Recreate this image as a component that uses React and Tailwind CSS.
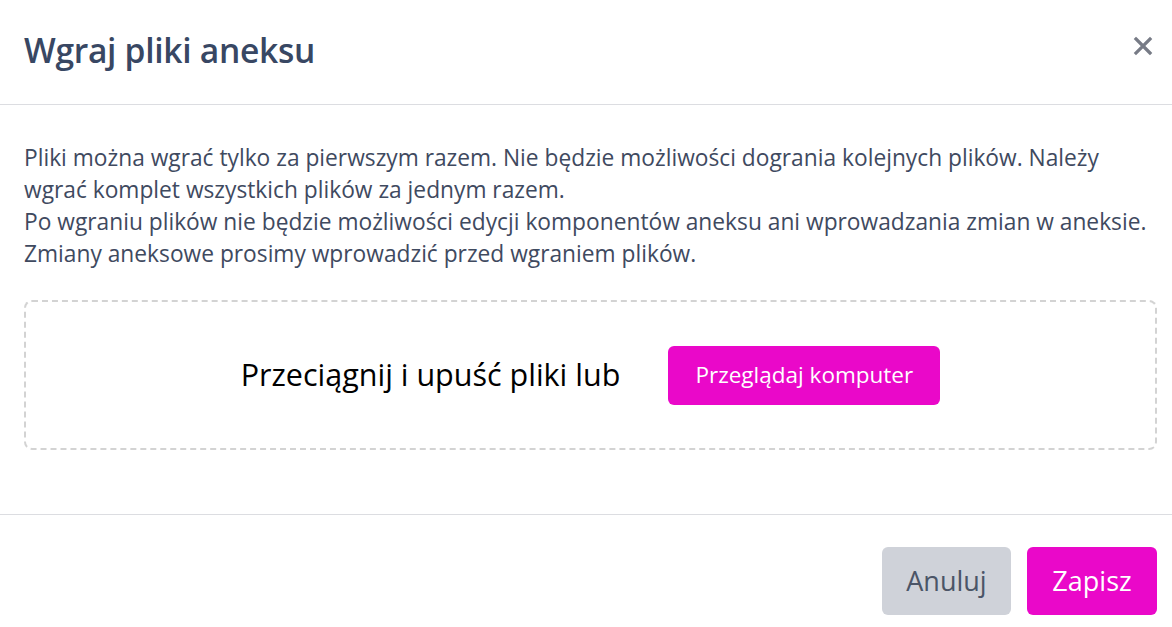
import React from "react";

export default function App() {
  return (
    <div className="w-[1172px] h-[627px] bg-white overflow-hidden" style={{ fontFamily: '"Open Sans", "Noto Sans", sans-serif' }}>
      <div className="h-[105px] flex items-center justify-between pl-6 pr-[18px] pb-[4px] border-b border-[#dcdde1]">
        <h1 className="text-[33.6px] font-semibold text-[#384763] tracking-[-0.3px]">Wgraj pliki aneksu</h1>
        <button className="text-[#777b86] mb-[8px]">
          <svg width="22" height="22" viewBox="0 0 22 22" fill="none" stroke="currentColor" strokeWidth="3.2" strokeLinecap="square">
            <path d="M4 4L18 18M18 4L4 18" />
          </svg>
        </button>
      </div>
      <div className="pl-6 pr-[15px] pt-[37px] pb-[64px] border-b border-[#dcdde1]">
        <p className="text-[22.75px] leading-[32px] text-[#3f4a5f]">
          Pliki można wgrać tylko za pierwszym razem. Nie będzie możliwości dogrania kolejnych plików. Należy wgrać komplet wszystkich plików za jednym razem.
          <br />
          Po wgraniu plików nie będzie możliwości edycji komponentów aneksu ani wprowadzania zmian w aneksie. Zmiany aneksowe prosimy wprowadzić przed wgraniem plików.
        </p>
        <div className="mt-[30px] h-[150px] border-2 border-dashed border-[#d3d3d3] rounded-lg flex items-center justify-center gap-[48px]">
          <span className="text-[30.5px] text-black">Przeciągnij i upuść pliki lub</span>
          <button className="h-[59px] w-[272px] rounded-md bg-[#ea08c9] text-white text-[22.5px]">Przeglądaj komputer</button>
        </div>
      </div>
      <div className="flex justify-end gap-4 px-[15px] pt-8">
        <button className="w-[129px] h-[68px] rounded-md bg-[#cfd2d9] text-[#4b5567] text-[27px]">Anuluj</button>
        <button className="w-[130px] h-[68px] rounded-md bg-[#ea08c9] text-white text-[27px]">Zapisz</button>
      </div>
    </div>
  );
}
